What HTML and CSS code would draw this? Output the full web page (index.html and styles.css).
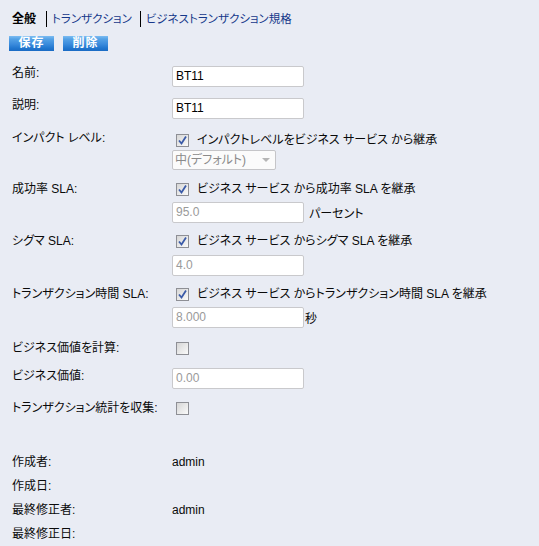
FILE: index.html
```html
<!DOCTYPE html>
<html lang="ja">
<head>
<meta charset="utf-8">
<title>BT11</title>
<link rel="stylesheet" href="styles.css">
</head>
<body>
<div class="page">
  <nav class="tabs">
    <span class="tab active">全般</span>
    <span class="sep"></span>
    <a class="tab">トランザクション</a>
    <span class="sep"></span>
    <a class="tab">ビジネストランザクション規格</a>
  </nav>
  <div class="toolbar">
    <button class="btn">保存</button>
    <button class="btn">削除</button>
  </div>

  <div class="form">
    <div class="row r-name">
      <div class="label">名前:</div>
      <div class="val"><span class="field">BT11</span></div>
    </div>
    <div class="row r-desc">
      <div class="label">説明:</div>
      <div class="val"><span class="field">BT11</span></div>
    </div>
    <div class="row r-impact">
      <div class="label">インパクト レベル:</div>
      <div class="val">
        <div class="checkline"><span class="cb checked"><svg viewBox="0 0 13 13" width="13" height="13"><path d="M3 6.5 L5.5 9.5 L10 2.5" fill="none" stroke="#3a5aa8" stroke-width="1.8"/></svg></span>インパクトレベルをビジネス サービス から継承</div>
        <div class="select">中(デフォルト)<span class="arrow"></span></div>
      </div>
    </div>
    <div class="row r-success">
      <div class="label">成功率 SLA:</div>
      <div class="val">
        <div class="checkline"><span class="cb checked"><svg viewBox="0 0 13 13" width="13" height="13"><path d="M3 6.5 L5.5 9.5 L10 2.5" fill="none" stroke="#3a5aa8" stroke-width="1.8"/></svg></span>ビジネス サービス から成功率 SLA を継承</div>
        <div class="inline gap5"><span class="field dis">95.0</span><span>パーセント</span></div>
      </div>
    </div>
    <div class="row r-sigma">
      <div class="label">シグマ SLA:</div>
      <div class="val">
        <div class="checkline"><span class="cb checked"><svg viewBox="0 0 13 13" width="13" height="13"><path d="M3 6.5 L5.5 9.5 L10 2.5" fill="none" stroke="#3a5aa8" stroke-width="1.8"/></svg></span>ビジネス サービス からシグマ SLA を継承</div>
        <div class="inline"><span class="field dis">4.0</span></div>
      </div>
    </div>
    <div class="row r-time">
      <div class="label">トランザクション時間 SLA:</div>
      <div class="val">
        <div class="checkline"><span class="cb checked"><svg viewBox="0 0 13 13" width="13" height="13"><path d="M3 6.5 L5.5 9.5 L10 2.5" fill="none" stroke="#3a5aa8" stroke-width="1.8"/></svg></span>ビジネス サービス からトランザクション時間 SLA を継承</div>
        <div class="inline gap1"><span class="field dis">8.000</span><span>秒</span></div>
      </div>
    </div>
    <div class="row r-calc">
      <div class="label">ビジネス価値を計算:</div>
      <div class="val"><div class="checkline"><span class="cb"></span></div></div>
    </div>
    <div class="row r-value">
      <div class="label">ビジネス価値:</div>
      <div class="val"><span class="field dis">0.00</span></div>
    </div>
    <div class="row r-stats">
      <div class="label">トランザクション統計を収集:</div>
      <div class="val"><div class="checkline"><span class="cb"></span></div></div>
    </div>

    <div class="row r-creator">
      <div class="label">作成者:</div>
      <div class="val text">admin</div>
    </div>
    <div class="row r-meta">
      <div class="label">作成日:</div>
      <div class="val text"></div>
    </div>
    <div class="row r-meta">
      <div class="label">最終修正者:</div>
      <div class="val text">admin</div>
    </div>
    <div class="row r-meta">
      <div class="label">最終修正日:</div>
      <div class="val text"></div>
    </div>
  </div>
</div>
</body>
</html>
```

FILE: styles.css
```css
html, body {
  margin: 0;
  padding: 0;
  background: #e9ecf4;
}
body {
  font-family: "Liberation Sans", "Noto Sans CJK JP", sans-serif;
  font-size: 12px;
  color: #0a0a0a;
  font-feature-settings: "palt" 1;
}
.page {
  padding: 11px 0 0 12px;
}
.tabs {
  display: flex;
  align-items: center;
  height: 16px;
  font-size: 11.5px;
  line-height: 16px;
}
.tab {
  color: #16388a;
  text-decoration: none;
}
.tab.active {
  color: #000;
  font-weight: bold;
  font-size: 12px;
}
.sep {
  width: 1px;
  height: 16px;
  background: #000;
  margin: 0 5px 0 8px;
}
.tab.active + .sep {
  margin-left: 10px;
}
.toolbar {
  display: flex;
  gap: 9px;
  margin: 9px 0 0 -3px;
}
.btn {
  width: 45px;
  height: 15px;
  padding: 0;
  border: 0;
  font-family: "Liberation Sans", "Noto Sans CJK JP", sans-serif;
  font-size: 12px;
  font-weight: bold;
  line-height: 15px;
  letter-spacing: 1px;
  color: #fff;
  background: linear-gradient(#7cbcf2 0%, #55a2e6 20%, #3a8bdc 55%, #2277cf 80%, #1a6bc4 100%);
}
.form {
  display: flex;
  flex-direction: column;
}
.row {
  display: grid;
  grid-template-columns: 160px 1fr;
  align-items: start;
}
.label {
  line-height: 14px;
  height: 14px;
  white-space: nowrap;
}
.val {
  display: flex;
  flex-direction: column;
  align-items: flex-start;
}
.val.text {
  line-height: 14px;
  min-height: 14px;
}
.field {
  box-sizing: border-box;
  display: block;
  width: 132px;
  height: 21px;
  padding: 0 3px;
  line-height: 19px;
  background: #fff;
  border: 1px solid #c9c9cc;
  border-radius: 2px;
  color: #000;
}
.field.dis {
  color: #9a9a9a;
}
.checkline {
  display: flex;
  align-items: center;
  height: 14px;
  line-height: 14px;
  white-space: nowrap;
}
.cb {
  box-sizing: border-box;
  display: inline-block;
  width: 13px;
  height: 13px;
  margin: 0 8px 0 4px;
  border: 1px solid #8e8f95;
  background: linear-gradient(135deg, #d6d6d6, #fafafa);
  position: relative;
}
.cb svg {
  position: absolute;
  left: -1px;
  top: -1px;
}
.select {
  box-sizing: border-box;
  position: relative;
  width: 104px;
  height: 20px;
  margin-top: 3px;
  padding-left: 2px;
  line-height: 18px;
  border: 1px solid #c5c5c8;
  border-radius: 2px;
  background: #fbfbfb;
  color: #8a8a8a;
}
.arrow {
  position: absolute;
  right: 5px;
  top: 7px;
  border-left: 4px solid transparent;
  border-right: 4px solid transparent;
  border-top: 4px solid #b5b5b5;
}
.inline {
  display: flex;
  align-items: center;
}
.gap5 { gap: 5px; margin-top: 6px; }
.gap1 { gap: 1px; margin-top: 6px; }
.r-sigma .inline { margin-top: 7px; }

.r-name { margin-top: 15px; }
.r-desc { margin-top: 11px; }
.r-impact { margin-top: 12px; }
.r-impact .checkline { margin-top: 2px; }
.r-success { margin-top: 12px; }
.r-sigma { margin-top: 11px; }
.r-time { margin-top: 11px; }
.r-calc { margin-top: 13px; }
.r-value { margin-top: 13px; }
.r-value .label { margin-top: 1px; }
.r-stats { margin-top: 12px; }
.r-creator { margin-top: 40px; }
.r-meta { margin-top: 10px; }
```
